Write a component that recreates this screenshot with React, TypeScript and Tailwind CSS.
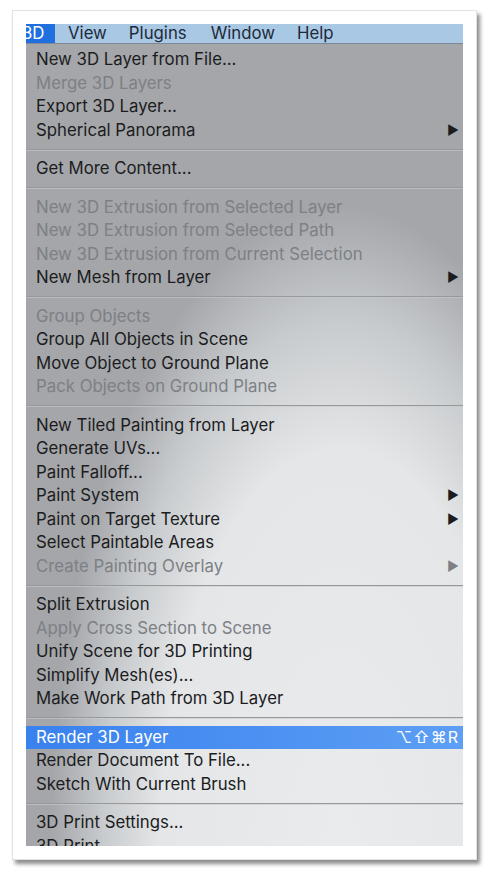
import React from "react";

type Item = { label: string; disabled?: boolean; submenu?: boolean; shortcut?: string; active?: boolean };

const groups: Item[][] = [
  [
    { label: "New 3D Layer from File..." },
    { label: "Merge 3D Layers", disabled: true },
    { label: "Export 3D Layer..." },
    { label: "Spherical Panorama", submenu: true },
  ],
  [{ label: "Get More Content..." }],
  [
    { label: "New 3D Extrusion from Selected Layer", disabled: true },
    { label: "New 3D Extrusion from Selected Path", disabled: true },
    { label: "New 3D Extrusion from Current Selection", disabled: true },
    { label: "New Mesh from Layer", submenu: true },
  ],
  [
    { label: "Group Objects", disabled: true },
    { label: "Group All Objects in Scene" },
    { label: "Move Object to Ground Plane" },
    { label: "Pack Objects on Ground Plane", disabled: true },
  ],
  [
    { label: "New Tiled Painting from Layer" },
    { label: "Generate UVs..." },
    { label: "Paint Falloff..." },
    { label: "Paint System", submenu: true },
    { label: "Paint on Target Texture", submenu: true },
    { label: "Select Paintable Areas" },
    { label: "Create Painting Overlay", disabled: true, submenu: true },
  ],
  [
    { label: "Split Extrusion" },
    { label: "Apply Cross Section to Scene", disabled: true },
    { label: "Unify Scene for 3D Printing" },
    { label: "Simplify Mesh(es)..." },
    { label: "Make Work Path from 3D Layer" },
  ],
  [
    { label: "Render 3D Layer", shortcut: "⌥⇧⌘R", active: true },
    { label: "Render Document To File..." },
    { label: "Sketch With Current Brush" },
  ],
  [{ label: "3D Print Settings..." }, { label: "3D Print" }],
];

function Row({ item }: { item: Item }) {
  const color = item.active ? "text-white" : item.disabled ? "text-[#7d8084]" : "text-[#1c1c1e]";
  return (
    <div
      className={`flex h-[23.5px] shrink-0 items-center justify-between pl-[10px] pr-[4px] ${color} ${
        item.active ? "bg-[linear-gradient(90deg,#3981ee,#5d9ff5)]" : ""
      }`}
    >
      <span className="whitespace-nowrap">{item.label}</span>
      {item.submenu && <span className="text-[13px] leading-none">▶</span>}
      {item.shortcut && <span className="text-[16px] tracking-[1px]">{item.shortcut}</span>}
    </div>
  );
}

export default function App() {
  return (
    <div className="min-h-screen bg-white pl-[12px] pt-[10px]" style={{ fontFamily: "Inter, 'Noto Sans', sans-serif" }}>
      <div className="w-[465px] h-[850px] border border-[#e2e2e2] bg-white p-[13px] shadow-[3px_4px_4px_rgba(0,0,0,0.45)]">
        <div className="flex h-[822px] flex-col overflow-hidden bg-[radial-gradient(ellipse_290px_640px_at_72%_100%,#e9ebed_0%,#e4e6e8_62%,#c8cbcd_82%,#a4a6a9_100%)] text-[16.8px]">
          {/* menu bar */}
          <div className="flex h-[20px] shrink-0 items-center border-b border-[#7f8894] bg-[#a9c8e3] text-[#1d2a3b]">
            <div className="flex h-full w-[29px] items-center overflow-hidden bg-[#1f6fde] text-white">
              <span className="-ml-[4px]">3D</span>
            </div>
            <span className="ml-[13px]">View</span>
            <span className="ml-[22px]">Plugins</span>
            <span className="ml-[24px]">Window</span>
            <span className="ml-[22px]">Help</span>
          </div>
          <div className="pt-[4px]">
            {groups.map((g, i) => (
              <div key={i}>
                {i > 0 && (
                  <div className="flex h-[15px] items-center">
                    <div className="h-[2px] w-full border-t border-[#96999c] bg-[#c9cbcd]/60" />
                  </div>
                )}
                {g.map((item) => (
                  <Row key={item.label} item={item} />
                ))}
              </div>
            ))}
          </div>
        </div>
      </div>
    </div>
  );
}
